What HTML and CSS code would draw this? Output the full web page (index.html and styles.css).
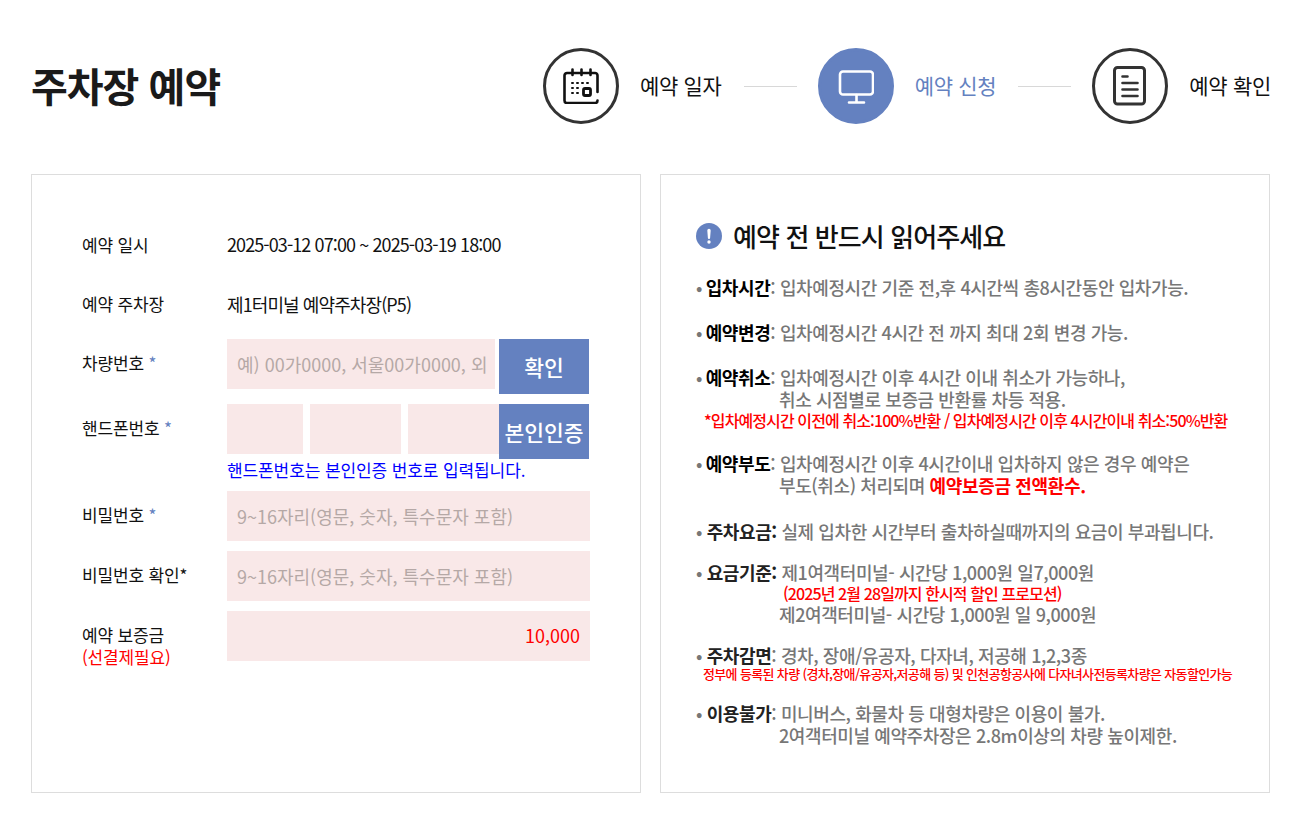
FILE: index.html
```html
<!DOCTYPE html>
<html lang="ko">
<head>
<meta charset="utf-8">
<title>주차장 예약</title>
<link rel="stylesheet" href="styles.css">
</head>
<body>
<header class="top">
  <h1 class="title">주차장 예약</h1>
  <ol class="steps">
    <li class="step">
      <span class="circle">
        <svg class="ico" viewBox="0 0 36 36" fill="none" stroke="#111" stroke-width="2.600" stroke-linecap="round" stroke-linejoin="round">
          <path d="M34.500 24V7.500a2.500 2.500 0 0 0-2.500-2.500H4a2.500 2.500 0 0 0-2.500 2.500V32.500A2.500 2.500 0 0 0 4 35h28a2.500 2.500 0 0 0 2.500-2.500"/>
          <path d="M9.500 1.500v5.500M18.500 1.500v5.500M27.500 1.500v5.500"/>
          <path d="M9 15h1M14 15h1M19 15h1M24 15h1M9 20h1M14 20h1M9 25h1M14 25h1" stroke-width="2"/>
          <rect x="20.500" y="20.500" width="7" height="7" rx="1.500" stroke-width="2.800"/>
        </svg>
      </span>
      <span class="step-label">예약 일자</span>
    </li>
    <li class="rule"></li>
    <li class="step active">
      <span class="circle">
        <svg class="ico" viewBox="0 0 36 36" fill="none" stroke="#fff" stroke-width="2.600" stroke-linecap="round" stroke-linejoin="round">
          <rect x="2" y="3.500" width="33" height="23" rx="3"/>
          <path d="M18.500 27v7M11 34.500h15"/>
        </svg>
      </span>
      <span class="step-label">예약 신청</span>
    </li>
    <li class="rule"></li>
    <li class="step">
      <span class="circle">
        <svg class="ico tall" viewBox="0 0 34 40" fill="none" stroke="#333" stroke-linecap="round" stroke-linejoin="round">
          <rect x="1.500" y="1.500" width="30" height="36.500" rx="3" stroke-width="3"/>
          <path d="M9.500 10.500h5M9.500 17h15M9.500 23.500h15M9.500 30h15" stroke-width="2.600"/>
        </svg>
      </span>
      <span class="step-label">예약 확인</span>
    </li>
  </ol>
</header>

<main class="cards">
  <section class="card form">
    <div class="row plain"><div class="label">예약 일시</div><div class="value first">2025-03-12 07:00 ~ 2025-03-19 18:00</div></div>
    <div class="row plain second"><div class="label">예약 주차장</div><div class="value">제1터미널 예약주차장(P5)</div></div>
    <div class="row">
      <div class="label">차량번호 <em>*</em></div>
      <div class="field-btn">
        <div class="input ph grow">예) 00가0000, 서울00가0000, 외</div>
        <div class="btn">확인</div>
      </div>
    </div>
    <div class="row">
      <div class="label">핸드폰번호 <em>*</em></div>
      <div>
        <div class="field-btn phone">
          <div class="input p1"></div>
          <div class="input p2"></div>
          <div class="input p3"></div>
          <div class="btn over">본인인증</div>
        </div>
        <div class="note">핸드폰번호는 본인인증 번호로 입력됩니다.</div>
      </div>
    </div>
    <div class="row"><div class="label">비밀번호 <em>*</em></div><div class="input ph full">9~16자리(영문, 숫자, 특수문자 포함)</div></div>
    <div class="row"><div class="label">비밀번호 확인<em class="dark">*</em></div><div class="input ph full">9~16자리(영문, 숫자, 특수문자 포함)</div></div>
    <div class="row"><div class="label two">예약 보증금<br><span class="red">(선결제필요)</span></div><div class="input full amount">10,000</div></div>
  </section>

  <section class="card info">
    <h2 class="info-title">
      <svg class="bang" viewBox="0 0 26 26"><circle cx="13" cy="13" r="13" fill="#6481c0"/><path d="M11.300 7.500a1.700 1.700 0 0 1 3.400 0L14.100 15a1.100 1.100 0 0 1-2.200 0Z" fill="#fff"/><circle cx="13" cy="19" r="1.700" fill="#fff"/></svg>
      예약 전 반드시 읽어주세요
    </h2>
    <div class="item i1"><span class="dot">•</span> <b>입차시간</b>: 입차예정시간 기준 전,후 4시간씩 총8시간동안 입차가능.</div>
    <div class="item i2"><span class="dot">•</span> <b>예약변경</b>: 입차예정시간 4시간 전 까지 최대 2회 변경 가능.</div>
    <div class="item i3"><span class="dot">•</span> <b>예약취소</b>: 입차예정시간 이후 4시간 이내 취소가 가능하나,
      <div class="in">취소 시점별로 보증금 반환률 차등 적용.</div>
      <div class="alert">*입차예정시간 이전에 취소:100%반환 / 입차예정시간 이후 4시간이내 취소:50%반환</div></div>
    <div class="item i4"><span class="dot">•</span> <b>예약부도</b>: 입차예정시간 이후 4시간이내 입차하지 않은 경우 예약은
      <div class="in">부도(취소) 처리되며 <strong>예약보증금 전액환수.</strong></div></div>
    <div class="item i5 wide"><span class="dot">•</span> <b class="dk">주차요금:</b> 실제 입차한 시간부터 출차하실때까지의 요금이 부과됩니다.</div>
    <div class="item i6 wide"><span class="dot">•</span> <b class="dk">요금기준:</b> 제1여객터미널- 시간당 1,000원 일7,000원
      <div class="promo">(2025년 2월 28일까지 한시적 할인 프로모션)</div>
      <div class="in">제2여객터미널- 시간당 1,000원 일 9,000원</div></div>
    <div class="item i7 wide"><span class="dot">•</span> <b class="dk">주차감면</b>: 경차, 장애/유공자, 다자녀, 저공해 1,2,3종
      <div class="tiny">정부에 등록된 차량 (경차,장애/유공자,저공해 등) 및 인천공항공사에 다자녀사전등록차량은 자동할인가능</div></div>
    <div class="item i8 wide"><span class="dot">•</span> <b class="dk">이용불가</b>: 미니버스, 화물차 등 대형차량은 이용이 불가.
      <div class="in">2여객터미널 예약주차장은 2.8m이상의 차량 높이제한.</div></div>
  </section>
</main>
</body>
</html>
```
FILE: styles.css
```css
* { box-sizing: border-box; }
html, body { margin: 0; padding: 0; background: #fff; }
body {
  font-family: "Noto Sans CJK KR", "Noto Sans", sans-serif;
  color: #111;
  width: 1307px;
  height: 814px;
  overflow: hidden;
  padding: 48px 36px 0 31px;
}
.top { display: flex; justify-content: space-between; align-items: center; height: 76px; }
.title { margin: 0; padding-bottom: 2px; font-size: 40px; font-weight: 700; letter-spacing: -1px; line-height: 74px; color: #1a1a1a; }
.steps { list-style: none; margin: 0; padding: 0; display: flex; align-items: center; }
.step { display: flex; align-items: center; }
.circle {
  width: 76px; height: 76px; border-radius: 50%; border: 3px solid #333;
  display: flex; align-items: center; justify-content: center; background: #fff;
}
.ico { width: 36px; height: 36px; display: block; }
.ico.tall { width: 34px; height: 40px; }
.step-label { margin-left: 21px; padding-bottom: 2px; font-size: 21px; letter-spacing: -0.3px; color: #111; line-height: 30px; }
.active .circle { background: #6481c0; border-color: #6481c0; }
.active .step-label { color: #6481c0; }
.rule { width: 53px; height: 1px; background: #d8d8d8; margin: 0 21px 0 22px; }
.cards { display: flex; gap: 19px; margin-top: 50px; width: 1239px; }
.card { width: 610px; height: 619px; border: 1px solid #ddd; flex: none; }
.form { padding: 45px 50px 0; display: flex; flex-direction: column; gap: 10px; }
.row { display: grid; grid-template-columns: 145px 363px; align-items: start; }
.row.plain { height: 49px; align-items: center; }
.row.second { height: 50px; }
.label { font-size: 17px; letter-spacing: -0.15px; line-height: 48px; color: #111; }
.plain .label { line-height: 30px; }
.label em { font-style: normal; color: #6481c0; }
.label em.dark { color: #111; }
.label.two { line-height: 22px; padding-top: 13px; }
.red { color: #f00; }
.value { font-size: 18px; letter-spacing: -0.9px; color: #111; line-height: 30px; }
.value.first { padding-bottom: 2px; }
.field-btn { display: flex; height: 55px; }
.input { background: #f9e8e8; height: 50px; line-height: 50px; font-size: 18px; flex: none; }
.ph { color: #b5a8a6; padding: 0 10px; white-space: nowrap; overflow: hidden; }
.grow { width: 268px; margin-right: 4px; }
.full { width: 363px; }
.btn { width: 90px; height: 55px; background: #6481c0; color: #fff; font-size: 21.500px; font-weight: 500; line-height: 55px; text-align: center; flex: none; }
.p1 { width: 76px; margin-right: 7px; }
.p2 { width: 91px; margin-right: 7px; }
.p3 { width: 102px; margin-right: -11px; }
.over { position: relative; z-index: 1; white-space: nowrap; }
.note { color: #00f; font-size: 17px; letter-spacing: -0.1px; line-height: 22px; }
.amount { color: #f00; text-align: right; padding: 0 10px 0 0; line-height: 48px; }
.info { padding: 36px 35px 0; }
.info-title { margin: 0 0 15px; display: flex; align-items: center; font-size: 26px; font-weight: 500; letter-spacing: -0.9px; line-height: 50px; color: #111; }
.bang { width: 26px; height: 26px; margin-right: 11px; flex: none; display: block; }
.item { font-size: 18px; font-weight: 500; color: #777; letter-spacing: -0.4px; line-height: 22px; white-space: nowrap; }
.item b { color: #000; font-weight: 700; }
.item b.dk { color: #222; }
.dot { font-size: 18px; line-height: 0; margin-right: -1px; }
.wide .dot { margin-right: 0; }
.in { padding-left: 83px; }
.promo { color: #f00; font-size: 16px; letter-spacing: -0.9px; line-height: 20px; padding-left: 87px; }
.item strong { color: #f00; font-weight: 700; letter-spacing: -0.35px; }
.alert { color: #f00; font-size: 16px; letter-spacing: -0.9px; line-height: 20px; padding-left: 8px; }
.tiny { color: #f00; font-size: 13px; line-height: 16px; padding-left: 7px; letter-spacing: -0.65px; }
.i2 { margin-top: 23px; }
.i3 { margin-top: 23px; }
.i4 { margin-top: 22px; }
.i5 { margin-top: 24px; }
.i6 { margin-top: 19px; }
.i7 { margin-top: 19px; }
.i8 { margin-top: 20px; }
```
